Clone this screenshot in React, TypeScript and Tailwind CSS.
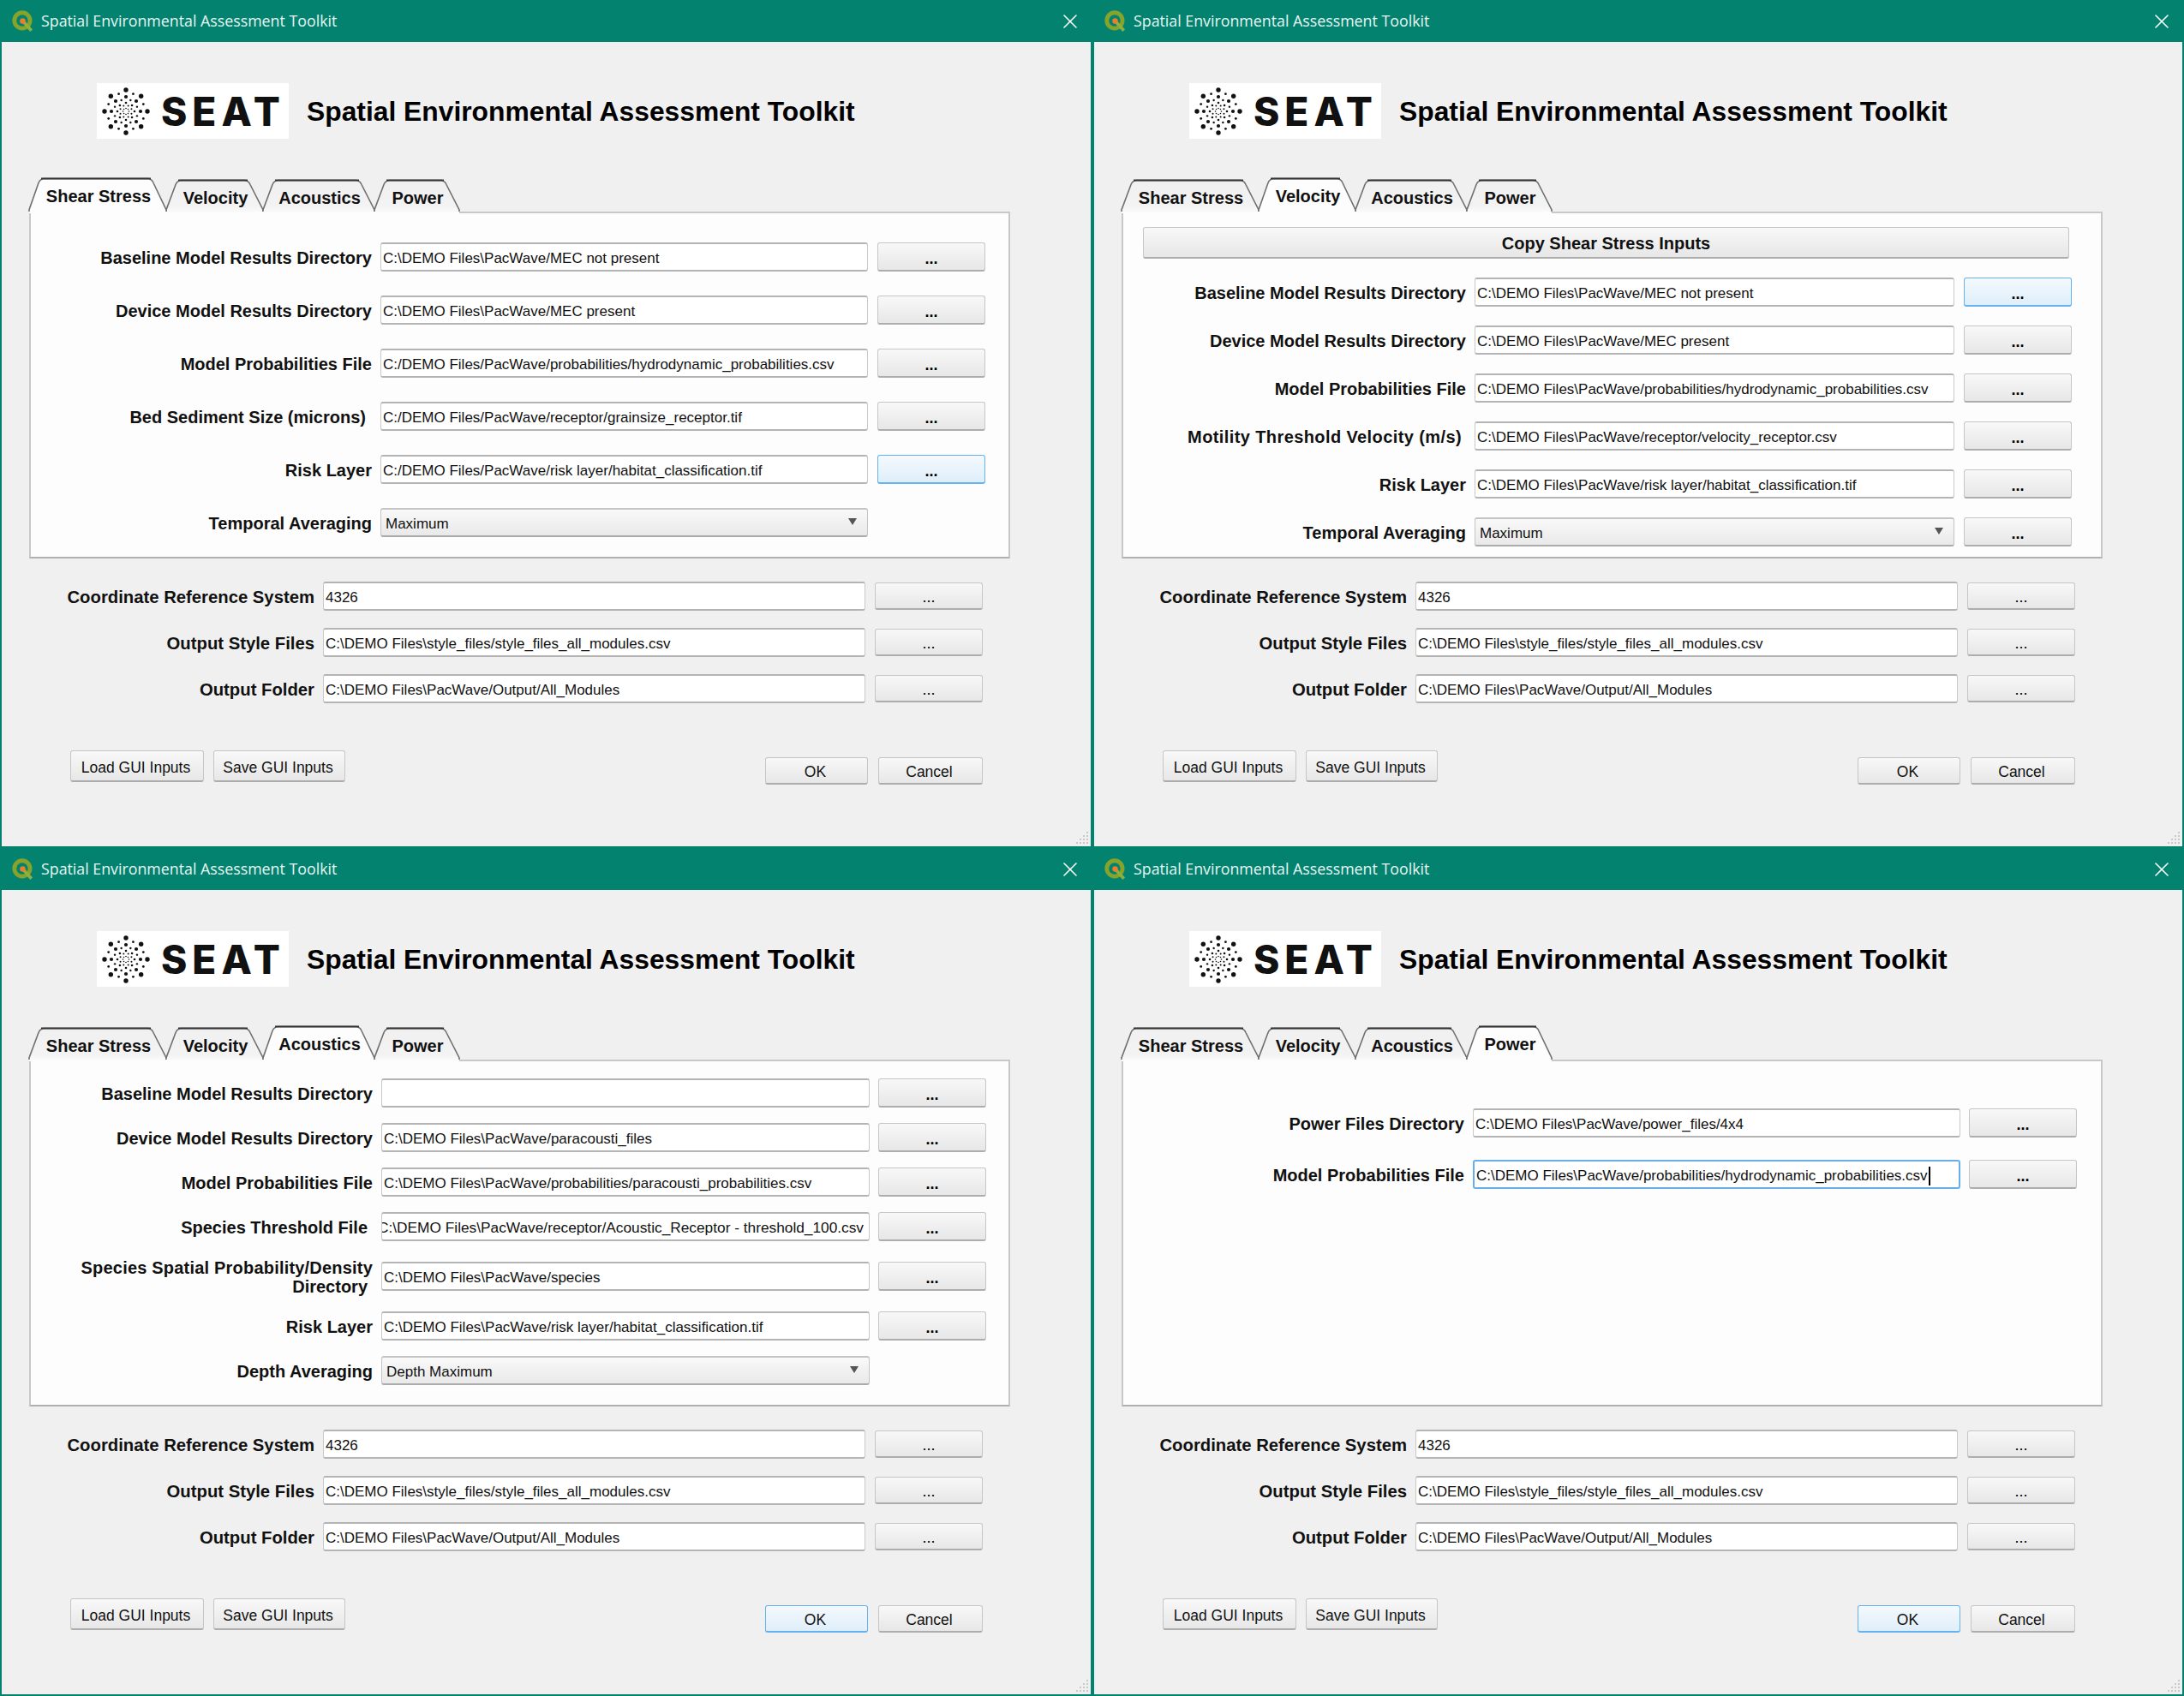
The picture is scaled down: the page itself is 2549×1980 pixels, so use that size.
import { X } from "lucide-react";

const TEAL = "border-[#03836f]";

const tabs = [
  { name: "Shear Stress", w: 160 },
  { name: "Velocity", w: 113 },
  { name: "Acoustics", w: 130 },
  { name: "Power", w: 99 },
];

type Row = {
  label: string;
  second?: string;
  value?: string;
  combo?: boolean;
  noButton?: boolean;
  hotButton?: boolean;
  focused?: boolean;
  shift?: string;
  clipped?: boolean;
};

type Pane = {
  active: number;
  labelW: string;
  inputW: string;
  btnGap: string;
  top: string;
  gap: string;
  copy?: boolean;
  okHot?: boolean;
  rows: Row[];
};

const panes: Pane[] = [
  {
    active: 0,
    labelW: "w-[398px]",
    inputW: "w-[569px]",
    btnGap: "ml-[11px]",
    top: "pt-[34px]",
    gap: "gap-[28px]",
    rows: [
      { label: "Baseline Model Results Directory", value: "C:\\DEMO Files\\PacWave/MEC not present" },
      { label: "Device Model Results Directory", value: "C:\\DEMO Files\\PacWave/MEC present" },
      { label: "Model Probabilities File", value: "C:/DEMO Files/PacWave/probabilities/hydrodynamic_probabilities.csv" },
      { label: "Bed Sediment Size (microns)", value: "C:/DEMO Files/PacWave/receptor/grainsize_receptor.tif", shift: "pr-[7px]" },
      { label: "Risk Layer", value: "C:/DEMO Files/PacWave/risk layer/habitat_classification.tif", hotButton: true },
      { label: "Temporal Averaging", value: "Maximum", combo: true, noButton: true },
    ],
  },
  {
    active: 1,
    labelW: "w-[400px]",
    inputW: "w-[560px]",
    btnGap: "ml-[11px]",
    top: "pt-[16px]",
    gap: "gap-[22px]",
    copy: true,
    rows: [
      { label: "Baseline Model Results Directory", value: "C:\\DEMO Files\\PacWave/MEC not present", hotButton: true },
      { label: "Device Model Results Directory", value: "C:\\DEMO Files\\PacWave/MEC present" },
      { label: "Model Probabilities File", value: "C:\\DEMO Files\\PacWave/probabilities/hydrodynamic_probabilities.csv" },
      { label: "Motility Threshold Velocity (m/s)", value: "C:\\DEMO Files\\PacWave/receptor/velocity_receptor.csv", shift: "pr-[5px] tracking-[0.4px]" },
      { label: "Risk Layer", value: "C:\\DEMO Files\\PacWave/risk layer/habitat_classification.tif" },
      { label: "Temporal Averaging", value: "Maximum", combo: true },
    ],
  },
  {
    active: 2,
    labelW: "w-[399px]",
    inputW: "w-[570px]",
    btnGap: "ml-[10px]",
    top: "pt-[20px]",
    gap: "gap-[18px]",
    okHot: true,
    rows: [
      { label: "Baseline Model Results Directory", value: "" },
      { label: "Device Model Results Directory", value: "C:\\DEMO Files\\PacWave/paracousti_files" },
      { label: "Model Probabilities File", value: "C:\\DEMO Files\\PacWave/probabilities/paracousti_probabilities.csv" },
      { label: "Species Threshold File", value: "C:\\DEMO Files\\PacWave/receptor/Acoustic_Receptor - threshold_100.csv", shift: "pr-[6px]", clipped: true },
      { label: "Species Spatial Probability/Density", second: "Directory", value: "C:\\DEMO Files\\PacWave/species", shift: "tracking-[0.2px]" },
      { label: "Risk Layer", value: "C:\\DEMO Files\\PacWave/risk layer/habitat_classification.tif" },
      { label: "Depth Averaging", value: "Depth Maximum", combo: true, noButton: true },
    ],
  },
  {
    active: 3,
    labelW: "w-[398px]",
    inputW: "w-[569px]",
    btnGap: "ml-[10px]",
    top: "pt-[55px]",
    gap: "gap-[26px]",
    okHot: true,
    rows: [
      { label: "Power Files Directory", value: "C:\\DEMO Files\\PacWave/power_files/4x4" },
      { label: "Model Probabilities File", value: "C:\\DEMO Files\\PacWave/probabilities/hydrodynamic_probabilities.csv", focused: true },
    ],
  },
];

const lowerRows = [
  { label: "Coordinate Reference System", value: "4326" },
  { label: "Output Style Files", value: "C:\\DEMO Files\\style_files/style_files_all_modules.csv" },
  { label: "Output Folder", value: "C:\\DEMO Files\\PacWave/Output/All_Modules" },
];

const rings = [
  { r: 25, n: 8, size: 2.7, turn: 0 },
  { r: 22, n: 8, size: 1.4, turn: 22.5 },
  { r: 17, n: 8, size: 2.1, turn: 0 },
  { r: 14, n: 8, size: 1.2, turn: 22.5 },
  { r: 10, n: 8, size: 1.3, turn: 0 },
  { r: 7, n: 8, size: 1, turn: 22.5 },
  { r: 3.5, n: 8, size: 0.8, turn: 0 },
];

const gripDots = [
  [14, 1], [10, 5], [14, 5], [6, 9], [10, 9], [14, 9], [2, 13], [6, 13], [10, 13], [14, 13],
];

const plainBtn = "border-[#c6c6c6] border-b-[#adadad] bg-gradient-to-b from-[#f8f8f8] to-[#e7e7e7]";

function SeatLogo() {
  return (
    <div className="flex h-[65px] w-[224px] items-center bg-white pl-[6px]">
      <svg width="56" height="56" viewBox="-28 -28 56 56" className="shrink-0">
        {rings.map((ring) =>
          Array.from({ length: ring.n }).map((_, i) => {
            const a = ((ring.turn + (i * 360) / ring.n) * Math.PI) / 180;
            return (
              <circle
                key={`${ring.r}-${i}`}
                cx={Math.cos(a) * ring.r}
                cy={Math.sin(a) * ring.r}
                r={ring.size}
                fill="#111"
              />
            );
          }),
        )}
      </svg>
      <span className="ml-[13px] font-['Inter',sans-serif] text-[46px] leading-none font-extrabold tracking-[6px] text-[#111]">
        SEAT
      </span>
    </div>
  );
}

function QgisIcon() {
  return (
    <svg width="28" height="28" viewBox="0 0 26 26" className="shrink-0">
      <circle cx="12" cy="12" r="8.5" fill="none" stroke="#86a32c" strokeWidth="4.5" />
      <path d="M13 13 L22 23" stroke="#8fb13a" strokeWidth="3.5" />
      <circle cx="12.5" cy="12.5" r="3" fill="#ee7d2b" />
    </svg>
  );
}

function TabShape({ w, active, id }: { w: number; active: boolean; id: string }) {
  const top = active ? 1.5 : 3.5;
  const h = 42;
  const outline = `L2 38 L13 ${top + 5} Q15 ${top} 20 ${top} L${w - 20} ${top} Q${w - 15} ${top} ${w - 13} ${top + 5} L${w + 2} 38 L${w + 2}`;
  return (
    <svg width={w + 4} height={h} viewBox={`0 0 ${w + 4} ${h}`} className="absolute top-0 left-[-2px]">
      <defs>
        <linearGradient id={id} x1="0" y1="0" x2="0" y2="1">
          <stop offset="0" stopColor={active ? "#fdfdfd" : "#f0f0f0"} />
          <stop offset="0.8" stopColor={active ? "#fdfdfd" : "#f3f3f3"} />
          <stop offset="1" stopColor="#fdfdfd" />
        </linearGradient>
      </defs>
      <path d={`M2 ${h} ${outline} ${h} Z`} fill={`url(#${id})`} />
      <path d={`M2 40 ${outline} 40`} fill="none" stroke="#707070" strokeWidth="1.6" />
      <path d={`M16 ${top} L${w - 16} ${top}`} stroke="#333" strokeWidth="2" />
    </svg>
  );
}

function DotsButton({ strong, hot, h = "h-[34px]" }: { strong?: boolean; hot?: boolean; h?: string }) {
  return (
    <button
      className={`flex w-[126px] ${h} shrink-0 items-end justify-center rounded-[3px] border border-b-2 pb-[2px] text-[18px] leading-[22px] ${
        strong ? "font-bold" : "font-normal"
      } ${hot ? "border-[#66b2ee] bg-gradient-to-b from-[#f4f9fd] to-[#dfeefa]" : plainBtn}`}
    >
      ...
    </button>
  );
}

function Field({ row, w }: { row: { value?: string; combo?: boolean; focused?: boolean; clipped?: boolean }; w: string }) {
  const shell = row.focused
    ? "border-2 border-[#65b0ec] bg-white"
    : row.combo
      ? "border border-t-2 border-b-2 border-[#c4c4c4] border-b-[#ababab] bg-gradient-to-b from-[#f9f9f9] to-[#e9e9e9]"
      : "border border-t-2 border-b-2 border-[#c9c9c9] border-t-[#b4b4b4] border-b-[#b4b4b4] bg-white";
  return (
    <div
      className={`relative flex h-[34px] ${w} shrink-0 items-center overflow-hidden rounded-[3px] pt-[4px] ${shell} ${
        row.clipped ? "justify-end pr-[6px] text-[17.3px]" : row.combo ? "pl-[5px] text-[17px]" : "pl-[2px] text-[17px]"
      } whitespace-nowrap text-[#111]`}
    >
      <span className="shrink-0">{row.value}</span>
      {row.focused && <span className="ml-[1px] h-[22px] w-[2px] bg-black" />}
      {row.combo && (
        <svg width="10" height="8" viewBox="0 0 10 8" className="absolute top-[10px] right-[12px]">
          <path d="M0 0 H10 L5 8 Z" fill="#555" />
        </svg>
      )}
    </div>
  );
}

function Window({ pane, lower }: { pane: Pane; lower: boolean }) {
  return (
    <section className={`relative flex flex-col border-x-2 ${TEAL} bg-[#f0f0f0] ${lower ? "border-y-2" : ""}`}>
      <header className="-mx-[2px] flex h-[49px] shrink-0 items-center bg-[#03836f] pr-[12px] pl-[13px] text-white">
        <QgisIcon />
        <span className="ml-[7px] font-['Open_Sans',sans-serif] text-[17.8px] text-[#e8f5f2]">
          Spatial Environmental Assessment Toolkit
        </span>
        <X size={28} strokeWidth={1.3} className="ml-auto" />
      </header>

      <div className="mt-[48px] ml-[111px] flex items-center">
        <SeatLogo />
        <h1 className="ml-[21px] pt-[2px] text-[31.8px] font-bold text-black">Spatial Environmental Assessment Toolkit</h1>
      </div>

      <div className="relative z-10 mt-[45px] -mb-[2px] ml-[32px] flex h-[42px]">
        {tabs.map((tab, i) => {
          const active = i === pane.active;
          return (
            <div
              key={tab.name}
              className={`relative h-[42px] shrink-0 ${active ? "z-10" : ""}`}
              style={{ width: tab.w }}
            >
              <TabShape w={tab.w} active={active} id={`tab-${pane.active}-${i}`} />
              <span
                className={`absolute inset-x-0 pl-[2px] text-center text-[20px] leading-[24px] font-bold text-[#111] ${
                  active ? "top-[10px]" : "top-[12px]"
                }`}
              >
                {tab.name}
              </span>
            </div>
          );
        })}
      </div>

      <div
        className={`ml-[32px] flex h-[405px] w-[1145px] flex-col border-2 border-[#c8c8c8] border-b-[#b0b0b0] bg-[#fdfdfd] ${pane.top} ${pane.gap}`}
      >
        {pane.copy && (
          <button className={`ml-[23px] h-[37px] w-[1081px] shrink-0 rounded-[3px] border border-b-2 pt-[2px] text-[20px] font-bold text-[#111] ${plainBtn}`}>
            Copy Shear Stress Inputs
          </button>
        )}
        {pane.rows.map((row) => (
          <div key={row.label} className="flex items-center">
            <label className={`${pane.labelW} shrink-0 pt-[2px] text-right text-[20px] leading-[22px] font-bold text-[#111]`}>
              <span className={`block ${row.shift ?? ""}`}>{row.label}</span>
              {row.second && <span className="block pr-[6px]">{row.second}</span>}
            </label>
            <div className="ml-[10px]">
              <Field row={row} w={pane.inputW} />
            </div>
            {!row.noButton && (
              <div className={pane.btnGap}>
                <DotsButton strong hot={row.hotButton} />
              </div>
            )}
          </div>
        ))}
      </div>

      <div className="mt-[27px] flex flex-col gap-[20px]">
        {lowerRows.map((row) => (
          <div key={row.label} className="ml-[32px] flex items-center">
            <label className="w-[333px] shrink-0 pt-[2px] text-right text-[20.3px] font-bold text-[#111]">{row.label}</label>
            <div className="ml-[10px]">
              <Field row={row} w="w-[633px]" />
            </div>
            <div className="ml-[11px]">
              <DotsButton h="h-[32px]" />
            </div>
          </div>
        ))}
      </div>

      <div className="mt-[55px] ml-[80px] flex items-start text-[17.5px] text-[#111]">
        <button className={`h-[37px] w-[156px] rounded-[3px] border border-b-2 pt-[5px] pr-[3px] ${plainBtn}`}>
          Load GUI Inputs
        </button>
        <button className={`ml-[11px] h-[37px] w-[154px] rounded-[3px] border border-b-2 pt-[5px] pr-[3px] ${plainBtn}`}>
          Save GUI Inputs
        </button>
        <button
          className={`mt-[8px] ml-[490px] h-[32px] w-[120px] rounded-[3px] border border-b-2 pt-[3px] pr-[3px] ${
            pane.okHot ? "border-[#66b2ee] bg-gradient-to-b from-[#f4f9fd] to-[#dfeefa]" : plainBtn
          }`}
        >
          OK
        </button>
        <button className={`mt-[8px] ml-[12px] h-[32px] w-[122px] rounded-[3px] border border-b-2 pt-[3px] pr-[3px] ${plainBtn}`}>
          Cancel
        </button>
      </div>

      <svg width="16" height="15" viewBox="0 0 16 15" className="absolute right-[3px] bottom-[3px]">
        {gripDots.map(([x, y]) => (
          <rect key={`${x}-${y}`} x={x} y={y} width="2" height="2" fill="#c9c9c9" />
        ))}
      </svg>
    </section>
  );
}

export default function App() {
  return (
    <div className="grid h-[1980px] w-[2549px] grid-cols-[1275px_1274px] grid-rows-[988px_992px] overflow-hidden font-['Liberation_Sans',sans-serif]">
      {panes.map((pane, i) => (
        <Window key={pane.active} pane={pane} lower={i > 1} />
      ))}
    </div>
  );
}
